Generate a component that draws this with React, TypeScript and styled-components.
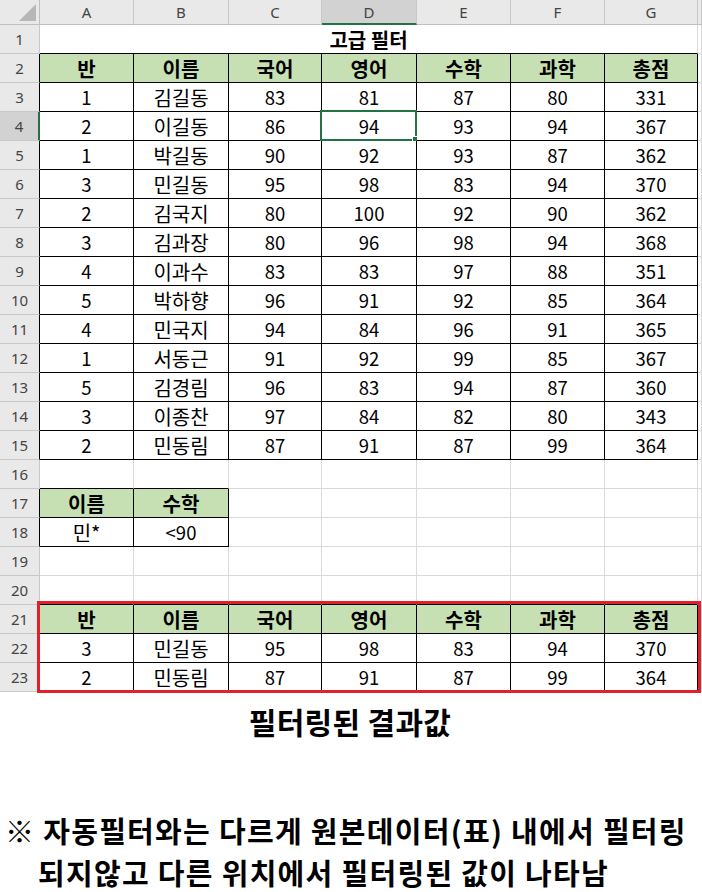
import React from 'react';
import styled, { createGlobalStyle } from 'styled-components';

const GlobalStyle = createGlobalStyle`
  html, body { margin: 0; padding: 0; background: #fff; }
  body {
    width: 702px;
    height: 892px;
    overflow: hidden;
    font-family: "Noto Sans CJK KR", "Noto Sans", sans-serif;
  }
`;

const GREEN = '#c6e0b4';
const GRID = '#d9d9d9';
const BLACK = '#000';
const ACCENT = '#217346';

const Page = styled.div`
  display: flex;
  flex-direction: column;
`;

const Sheet = styled.div`
  position: relative;
  display: grid;
  grid-template-columns: 40px 94px 95px 93px 95px 94px 94px 93px 1fr;
  grid-template-rows: 25px;
  grid-auto-rows: 29px;
`;

const Corner = styled.div`
  position: relative;
  box-sizing: border-box;
  background: #e9e9e9;
  border-right: 1px solid #bfbfbf;
  border-bottom: 1px solid #bfbfbf;
  &::after {
    content: '';
    position: absolute;
    right: 3px;
    bottom: 3px;
    width: 0;
    height: 0;
    border-left: 17px solid transparent;
    border-bottom: 17px solid #b7b7b7;
  }
`;

const ColHead = styled.div<{ $active?: boolean }>`
  box-sizing: border-box;
  display: flex;
  align-items: center;
  justify-content: center;
  background: ${p => (p.$active ? '#d2d2d2' : '#e9e9e9')};
  border-right: 1px solid #c8c8c8;
  border-bottom: ${p => (p.$active ? `2px solid ${ACCENT}` : '1px solid #bfbfbf')};
  color: #444;
  font-family: "Noto Sans", "DejaVu Sans", sans-serif;
  font-size: 15px;
  padding-top: ${p => (p.$active ? '1px' : '0')};
`;

const RowHead = styled.div<{ $active?: boolean; $edge: string }>`
  box-sizing: border-box;
  display: flex;
  align-items: center;
  justify-content: center;
  background: ${p => (p.$active ? '#d2d2d2' : '#e9e9e9')};
  border-right: ${p => (p.$active ? `2px solid ${ACCENT}` : `1px solid ${p.$edge}`)};
  border-bottom: 1px solid #c8c8c8;
  color: #444;
  font-family: "Noto Sans", "DejaVu Sans", sans-serif;
  font-size: 15px;
`;

const Cell = styled.div<{
  $fill?: string;
  $bold?: boolean;
  $hangul?: boolean;
  $rb: string;
  $bb: string;
  $span?: number;
}>`
  position: relative;
  box-sizing: border-box;
  display: flex;
  align-items: center;
  justify-content: center;
  grid-column: span ${p => p.$span ?? 1};
  background: ${p => p.$fill ?? '#fff'};
  border-right: 1px solid ${p => p.$rb};
  border-bottom: 1px solid ${p => p.$bb};
  color: #000;
  font-size: ${p => (p.$hangul ? '20px' : '18.5px')};
  font-weight: ${p => (p.$bold ? 700 : 400)};
  line-height: 1;
  padding-top: 1px;
`;

const Selection = styled.div`
  position: absolute;
  left: -2px;
  top: -2px;
  right: -1px;
  bottom: -1px;
  border: 2px solid ${ACCENT};
  pointer-events: none;
  &::after {
    content: '';
    position: absolute;
    right: -4px;
    bottom: -4px;
    width: 5px;
    height: 5px;
    background: ${ACCENT};
    border: 1px solid #fff;
  }
`;

const ResultFrame = styled.div`
  position: absolute;
  left: 37px;
  top: 601px;
  width: 664px;
  height: 92px;
  box-sizing: border-box;
  border: 3px solid #e3202a;
  pointer-events: none;
`;

const Notes = styled.div`
  display: flex;
  flex-direction: column;
  font-weight: 700;
  color: #000;
`;

const Caption = styled.div`
  text-align: center;
  font-size: 30px;
  line-height: 36px;
  margin-top: 11px;
  padding-right: 2px;
  letter-spacing: 0.3px;
`;

const Remark = styled.div`
  margin-top: 70px;
  padding-left: 5px;
  font-size: 29px;
  line-height: 42px;
  letter-spacing: 1.3px;
`;

const RemarkLine = styled.div<{ $indent?: boolean }>`
  padding-left: ${p => (p.$indent ? '33px' : '0')};
  white-space: nowrap;
`;

type CellData = { text: string; fill?: string; bold?: boolean; table?: boolean };

const HEAD = ['반', '이름', '국어', '영어', '수학', '과학', '총점'];
const DATA: (string | number)[][] = [
  [1, '김길동', 83, 81, 87, 80, 331],
  [2, '이길동', 86, 94, 93, 94, 367],
  [1, '박길동', 90, 92, 93, 87, 362],
  [3, '민길동', 95, 98, 83, 94, 370],
  [2, '김국지', 80, 100, 92, 90, 362],
  [3, '김과장', 80, 96, 98, 94, 368],
  [4, '이과수', 83, 83, 97, 88, 351],
  [5, '박하향', 96, 91, 92, 85, 364],
  [4, '민국지', 94, 84, 96, 91, 365],
  [1, '서동근', 91, 92, 99, 85, 367],
  [5, '김경림', 96, 83, 94, 87, 360],
  [3, '이종찬', 97, 84, 82, 80, 343],
  [2, '민동림', 87, 91, 87, 99, 364],
];
const RESULT: (string | number)[][] = [
  [3, '민길동', 95, 98, 83, 94, 370],
  [2, '민동림', 87, 91, 87, 99, 364],
];

const isHangul = (t: string) => /[\uac00-\ud7a3]/.test(t);

const empty = (): CellData => ({ text: '' });
const headRow = (): CellData[] =>
  HEAD.map(t => ({ text: t, fill: GREEN, bold: true, table: true }));
const dataRow = (r: (string | number)[]): CellData[] =>
  r.map(v => ({ text: String(v), table: true }));

// rows 2..23 (row 1 is the merged title)
const buildRows = (): CellData[][] => {
  const rows: CellData[][] = [];
  rows.push(headRow());
  DATA.forEach(r => rows.push(dataRow(r)));
  rows.push(Array.from({ length: 7 }, empty)); // 16
  rows.push([
    { text: '이름', fill: GREEN, bold: true, table: true },
    { text: '수학', fill: GREEN, bold: true, table: true },
    ...Array.from({ length: 5 }, empty),
  ]); // 17
  rows.push([
    { text: '민*', table: true },
    { text: '<90', table: true },
    ...Array.from({ length: 5 }, empty),
  ]); // 18
  rows.push(Array.from({ length: 7 }, empty)); // 19
  rows.push(Array.from({ length: 7 }, empty)); // 20
  rows.push(headRow()); // 21
  RESULT.forEach(r => rows.push(dataRow(r))); // 22, 23
  return rows;
};

const ROWS = buildRows();
const COL_LETTERS = ['A', 'B', 'C', 'D', 'E', 'F', 'G'];

export default function App() {
  return (
    <Page>
      <GlobalStyle />
      <Sheet>
        <Corner />
        {COL_LETTERS.map(c => (
          <ColHead key={c} $active={c === 'D'}>
            {c}
          </ColHead>
        ))}
        <ColHead />

        <RowHead $edge="#c8c8c8">1</RowHead>
        <Cell $span={7} $rb={GRID} $bb={BLACK} $bold $hangul>
          고급 필터
        </Cell>
        <Cell $rb={GRID} $bb={GRID} />

        {ROWS.map((row, ri) => {
          const rowNum = ri + 2;
          const below = ROWS[ri + 1];
          return (
            <React.Fragment key={rowNum}>
              <RowHead $active={rowNum === 4} $edge={row[0].table ? BLACK : '#c8c8c8'}>
                {rowNum}
              </RowHead>
              {row.map((c, ci) => {
                const rightTable = row[ci + 1]?.table;
                const belowTable = below?.[ci]?.table;
                return (
                  <Cell
                    key={ci}
                    $fill={c.fill}
                    $bold={c.bold}
                    $hangul={isHangul(c.text)}
                    $rb={c.table || rightTable ? BLACK : GRID}
                    $bb={c.table || belowTable ? BLACK : GRID}
                  >
                    {c.text}
                    {rowNum === 4 && ci === 3 && <Selection />}
                  </Cell>
                );
              })}
              <Cell $rb={GRID} $bb={GRID} />
            </React.Fragment>
          );
        })}
        <ResultFrame />
      </Sheet>
      <Notes>
        <Caption>필터링된 결과값</Caption>
        <Remark>
          <RemarkLine>※ 자동필터와는 다르게 원본데이터(표) 내에서 필터링</RemarkLine>
          <RemarkLine $indent>되지않고 다른 위치에서 필터링된 값이 나타남</RemarkLine>
        </Remark>
      </Notes>
    </Page>
  );
}
